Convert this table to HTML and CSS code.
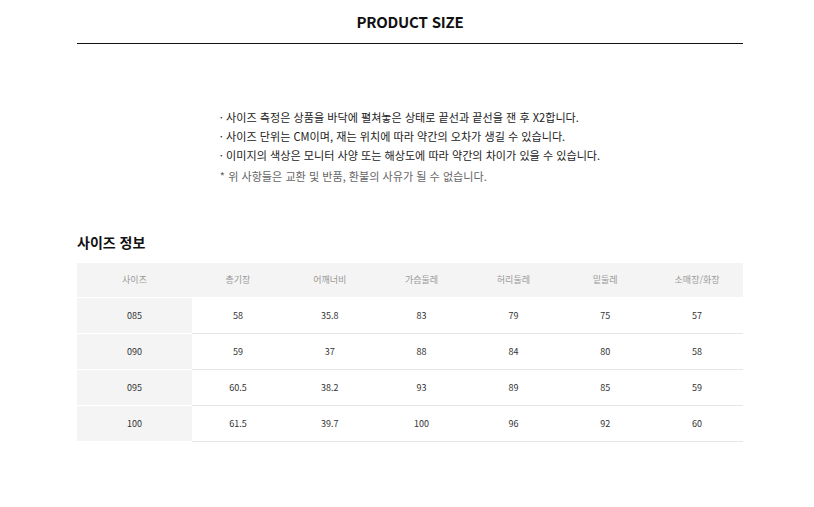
FILE: index.html
```html
<!DOCTYPE html>
<html lang="ko">
<head>
<meta charset="utf-8">
<title>Product Size</title>
<link rel="stylesheet" href="styles.css">
</head>
<body>
<div class="wrap">
  <header class="page-head">
    <h1 class="page-title">PRODUCT SIZE</h1>
  </header>
  <div class="notes-box">
    <ul class="notes">
      <li class="note">· 사이즈 측정은 상품을 바닥에 펼쳐놓은 상태로 끝선과 끝선을 잰 후 X2합니다.</li>
      <li class="note">· 사이즈 단위는 CM이며, 재는 위치에 따라 약간의 오차가 생길 수 있습니다.</li>
      <li class="note">· 이미지의 색상은 모니터 사양 또는 해상도에 따라 약간의 차이가 있을 수 있습니다.</li>
      <li class="note note-sub">* 위 사항들은 교환 및 반품, 환불의 사유가 될 수 없습니다.</li>
    </ul>
  </div>
  <h2 class="section-title">사이즈 정보</h2>
  <table class="size-table">
    <thead>
      <tr>
        <th class="col-first">사이즈</th>
        <th>총기장</th>
        <th>어깨너비</th>
        <th>가슴둘레</th>
        <th>허리둘레</th>
        <th>밑둘레</th>
        <th>소매장/화장</th>
      </tr>
    </thead>
    <tbody>
      <tr><th class="col-first">085</th><td>58</td><td>35.8</td><td>83</td><td>79</td><td>75</td><td>57</td></tr>
      <tr><th class="col-first">090</th><td>59</td><td>37</td><td>88</td><td>84</td><td>80</td><td>58</td></tr>
      <tr><th class="col-first">095</th><td>60.5</td><td>38.2</td><td>93</td><td>89</td><td>85</td><td>59</td></tr>
      <tr><th class="col-first">100</th><td>61.5</td><td>39.7</td><td>100</td><td>96</td><td>92</td><td>60</td></tr>
    </tbody>
  </table>
</div>
</body>
</html>
```
FILE: styles.css
```css
* { box-sizing: border-box; }
html, body { margin: 0; padding: 0; background: #fff; }
body {
  font-family: "Noto Sans CJK KR", "Noto Sans", sans-serif;
  color: #222;
}
.wrap {
  width: 666px;
  margin-left: 77px;
}
.page-head {
  padding-top: 12px;
  height: 44px;
  border-bottom: 1px solid #111;
}
.page-title {
  margin: 0;
  text-align: center;
  font-size: 15px;
  line-height: 20px;
  font-weight: 700;
  color: #111;
  letter-spacing: -0.2px;
}
.notes-box {
  display: flex;
  justify-content: center;
  padding-top: 64px;
}
.notes {
  list-style: none;
  margin: 0;
  padding: 0;
}
.note {
  font-size: 11.1px;
  line-height: 19px;
  color: #222;
}
.note-sub {
  margin-top: 2px;
  color: #666;
}
.section-title {
  margin: 46px 0 11px;
  font-size: 14px;
  line-height: 20px;
  font-weight: 700;
  color: #111;
}
.size-table {
  width: 666px;
  border-collapse: collapse;
  table-layout: fixed;
}
.size-table th,
.size-table td {
  padding: 0;
  text-align: center;
  font-size: 9px;
  font-weight: 400;
}
.size-table thead th {
  height: 34px;
  background: #f4f4f4;
  color: #999;
  border-bottom: 1px solid #fff;
}
.size-table thead th.col-first { width: 115px; }
.size-table tbody th,
.size-table tbody td {
  height: 36px;
  color: #333;
}
.size-table tbody td { border-bottom: 1px solid #e6e6e6; }
.size-table tbody th {
  background: #f4f4f4;
  border-bottom: 1px solid #fff;
}
```
